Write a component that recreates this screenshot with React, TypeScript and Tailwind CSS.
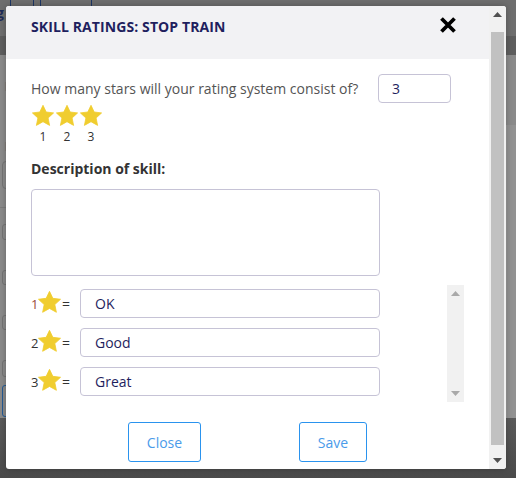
import { useState } from "react";

const FONT = { fontFamily: '"Open Sans", "Liberation Sans", sans-serif' };

function Star({ size = 24 }: { size?: number }) {
  return (
    <svg width={size} height={size} viewBox="0 0 24 24" className="shrink-0">
      <path
        d="M12 1.3 L15.2 8 L22.6 8.9 L17.1 14 L18.6 21.4 L12 17.7 L5.4 21.4 L6.9 14 L1.4 8.9 L8.8 8 Z"
        fill="#f0cd2f"
        stroke="#f0cd2f"
        strokeWidth="0.8"
        strokeLinejoin="round"
      />
    </svg>
  );
}

function Arrow({ up, color }: { up?: boolean; color: string }) {
  return (
    <svg width="9" height="5" viewBox="0 0 9 5">
      <path d={up ? "M0 5 L4.5 0 L9 5 Z" : "M0 0 L4.5 5 L9 0 Z"} fill={color} />
    </svg>
  );
}

const RATINGS = [
  { n: "1", label: "OK", numColor: "text-[#9a4b3c]" },
  { n: "2", label: "Good", numColor: "text-[#333]" },
  { n: "3", label: "Great", numColor: "text-[#333]" },
];

export default function App() {
  const [count, setCount] = useState("3");
  const [desc, setDesc] = useState("");

  return (
    <div className="relative w-[516px] h-[478px] overflow-hidden bg-[#8a8a8a]" style={FONT}>
      {/* dimmed page behind the dialog */}
      <div className="flex flex-col h-full">
        <div className="h-[36px] bg-[#6e6e6e] flex items-start">
          <span className="text-[#1d2b57] text-[14px] font-bold leading-none mt-[6px] -ml-[4px]">g</span>
          <div className="ml-[6px] w-[24px] h-[10px] border-x border-b border-[#1d3563] rounded-b-[3px]" />
          <div className="ml-[6px] w-[52px] h-[10px] border-x border-b border-[#1d3563] rounded-b-[3px]" />
        </div>
        <div className="h-[19px] bg-[#5e5e5e]" />
        <div className="h-[363px] bg-[#8a8a8a] flex">
          <div className="w-[40px] flex flex-col">
            <span className="mt-[25px] ml-[4px] text-[13px] font-bold leading-none text-[#7a7a7a]">E</span>
            <span className="mt-[47px] ml-[4px] text-[13px] font-bold leading-none text-[#7a7a7a]">E</span>
            <div className="mt-[8px] ml-[2px] h-[28px] border border-[#747474] rounded-[4px]" />
            <div className="mt-[18px] h-px bg-[#7c7c7c]" />
            <div className="mt-[16px] ml-[2px] h-[16px] border border-[#747474] rounded-[3px]" />
            <div className="mt-[30px] ml-[2px] h-[15px] border border-[#747474] rounded-[3px]" />
            <div className="mt-[30px] ml-[2px] h-[15px] border border-[#747474] rounded-[3px]" />
            <div className="mt-[30px] ml-[2px] h-[17px] border border-[#747474] rounded-[3px]" />
            <div className="mt-[8px] ml-[2px] h-[32px] border border-[#245a94] rounded-[3px]" />
          </div>
          <div className="flex-1" />
          <div className="w-[10px] flex flex-col">
            <div className="h-[70px]" />
            <div className="flex-1 bg-[#929292] border-l border-[#9a9a9a]" />
          </div>
        </div>
        <div className="flex-1 bg-gradient-to-b from-[#5a5a5a] to-[#4a4a4a]" />
      </div>

      {/* dialog */}
      <div className="absolute left-[6px] top-[6px] w-[500px] h-[463px] bg-white rounded-[3px] overflow-hidden flex shadow-[0_0_6px_rgba(0,0,0,0.25)]">
        <div className="w-[483px] flex flex-col">
          <div className="h-[53px] shrink-0 bg-[#f2f2f4] flex items-start justify-between pl-[25px] pr-[32px] pt-[10px]">
            <h2 className="text-[14px] leading-[20px] mt-[1px] font-bold tracking-[0.1px] text-[#1f1f5e]">
              SKILL RATINGS: STOP TRAIN
            </h2>
            <svg width="18" height="18" viewBox="0 0 18 18">
              <path d="M2.5 2.5 L15.5 15.5 M15.5 2.5 L2.5 15.5" stroke="#000" strokeWidth="3.8" />
            </svg>
          </div>

          <div className="pl-[25px] pt-[15px] flex flex-col">
            <div className="w-[420px] flex items-center justify-between">
              <span className="text-[14px] leading-[20px] text-[#545454]">
                How many stars will your rating system consist of?
              </span>
              <input
                value={count}
                onChange={(e) => setCount(e.target.value)}
                className="w-[73px] h-[29px] px-[13px] text-[14px] text-[#1f1f5e] border border-[#c6c3d6] rounded-[4px] outline-none"
              />
            </div>

            <div className="flex mt-[1px]">
              {["1", "2", "3"].map((n) => (
                <div key={n} className="w-[24px] flex flex-col items-center">
                  <Star />
                  <span className="mt-[1px] text-[12px] leading-[16px] text-[#333]">{n}</span>
                </div>
              ))}
            </div>

            <label className="mt-[14px] text-[14px] leading-[20px] font-bold text-[#333]">Description of skill:</label>
            <textarea
              value={desc}
              onChange={(e) => setDesc(e.target.value)}
              className="mt-[10px] w-[349px] h-[87px] border border-[#c6c3d6] rounded-[4px] resize-none outline-none"
            />

            <div className="mt-[9px] w-[433px] h-[117px] flex">
              <div className="flex-1 pt-[4px] flex flex-col gap-[10px]">
                {RATINGS.map((r) => (
                  <div key={r.n} className="flex items-center h-[29px]">
                    <span className={`w-[7px] text-[13px] leading-[20px] ${r.numColor}`}>{r.n}</span>
                    <div className="-ml-[1px] -mt-[3px]">
                      <Star size={25} />
                    </div>
                    <span className="text-[14px] leading-[20px] text-[#333]">=</span>
                    <input
                      readOnly
                      value={r.label}
                      className="ml-[10px] w-[300px] h-[29px] px-[14px] text-[14px] text-[#1f1f5e] border border-[#c6c3d6] rounded-[4px] outline-none"
                    />
                  </div>
                ))}
              </div>
              <div className="w-[17px] bg-[#f1f1f1] flex flex-col justify-between">
                <div className="h-[17px] flex items-center justify-center">
                  <Arrow up color="#a9a9a9" />
                </div>
                <div className="h-[17px] flex items-center justify-center">
                  <Arrow color="#a9a9a9" />
                </div>
              </div>
            </div>
          </div>

          <div className="mt-[20px] flex justify-center gap-[98px]">
            <button className="w-[73px] h-[40px] border border-[#2a93ee] rounded-[3px] text-[14px] text-[#4a9bea] bg-white">
              Close
            </button>
            <button className="w-[68px] h-[40px] border border-[#2a93ee] rounded-[3px] text-[14px] text-[#4a9bea] bg-white">
              Save
            </button>
          </div>
        </div>

        {/* dialog scrollbar */}
        <div className="w-[17px] bg-[#f1f1f1] flex flex-col items-center">
          <div className="h-[17px] flex items-center justify-center">
            <Arrow up color="#505050" />
          </div>
          <div className="mt-[9px] w-[13px] h-[413px] bg-[#c1c1c1]" />
          <div className="flex-1" />
          <div className="h-[17px] flex items-center justify-center">
            <Arrow color="#505050" />
          </div>
        </div>
      </div>
    </div>
  );
}
